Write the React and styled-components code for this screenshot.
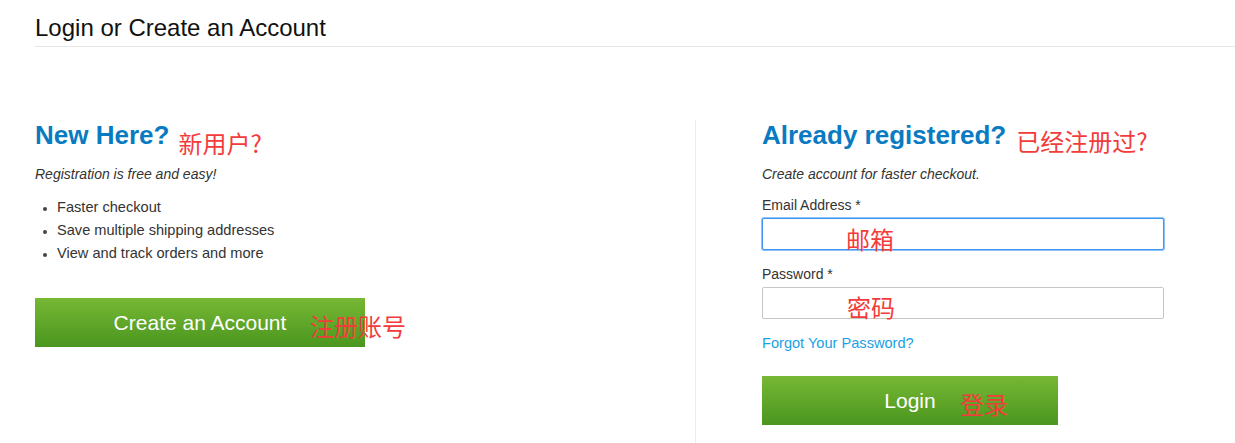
import React from "react";
import styled, { createGlobalStyle } from "styled-components";

const GlobalStyle = createGlobalStyle`
  html, body {
    margin: 0;
    padding: 0;
    background: #fff;
  }
  body {
    font-family: Arial, "Liberation Sans", sans-serif;
    color: #333;
  }
`;

const Page = styled.div`
  width: 1235px;
  height: 443px;
  overflow: hidden;
  padding-left: 35px;
  box-sizing: border-box;
`;

const PageTitle = styled.h1`
  margin: 0;
  padding: 14px 0 4px;
  font-size: 24px;
  line-height: 28px;
  font-weight: normal;
  color: #111;
  border-bottom: 1px solid #e8e8e8;
`;

const Columns = styled.div`
  display: grid;
  grid-template-columns: 660px 1fr;
  margin-top: 73px;
  height: 330px;
`;

const Column = styled.section`
  display: flex;
  flex-direction: column;
  align-items: flex-start;
  padding-left: ${(p) => p.$pad || 0}px;
  border-left: ${(p) => (p.$divider ? "1px solid #ececec" : "none")};
`;

const HeadingRow = styled.div`
  display: flex;
  align-items: flex-start;
  height: 30px;
  gap: ${(p) => p.$gap}px;
`;

const Heading = styled.h2`
  margin: 0;
  font-size: 26px;
  line-height: 30px;
  font-weight: bold;
  color: #0a7bc1;
`;

// red hand-written annotations laid over the page
const Note = styled.span`
  font-family: "Noto Sans CJK SC", "Noto Sans", sans-serif;
  font-size: 24px;
  line-height: 24px;
  color: #f23c3c;
  white-space: nowrap;
  pointer-events: none;
`;

const HeadNote = styled(Note)`
  margin-top: ${(p) => p.$top}px;
`;

const OverNote = styled(Note)`
  position: absolute;
  top: ${(p) => p.$top}px;
  left: ${(p) => p.$left}px;
`;

const Intro = styled.p`
  margin: 15px 0 0;
  font-size: 14px;
  line-height: 18px;
  font-style: italic;
  color: #333;
`;

const Perks = styled.ul`
  margin: 13px 0 0;
  padding-left: 22px;
  font-size: 14.6px;
  line-height: 23px;
  color: #333;

  li::marker {
    font-size: 12px;
    color: #444;
  }
`;

const ButtonWrap = styled.div`
  position: relative;
  margin-top: ${(p) => p.$top}px;
`;

const GreenButton = styled.button`
  display: block;
  width: ${(p) => p.$width}px;
  height: 49px;
  border: none;
  padding: 0;
  background: linear-gradient(#77b834, #4a961f);
  color: #fff;
  font-family: Arial, "Liberation Sans", sans-serif;
  font-size: 21px;
  cursor: pointer;
`;

const Field = styled.div`
  position: relative;
  display: flex;
  flex-direction: column;
  gap: 4px;
  margin-top: ${(p) => p.$top}px;
`;

const Label = styled.label`
  font-size: 14px;
  line-height: 18px;
  color: #333;
`;

const Input = styled.input`
  box-sizing: border-box;
  width: 402px;
  height: 32px;
  padding: 0 8px;
  border: 1px solid ${(p) => (p.$focused ? "#3f97f1" : "#c6c6c6")};
  box-shadow: ${(p) => (p.$focused ? "0 0 0 1px #8cc2f8" : "none")};
  border-radius: 2px;
  outline: none;
  font-size: 14px;
`;

const ForgotLink = styled.a`
  display: block;
  margin-top: 15px;
  font-size: 14.6px;
  line-height: 18px;
  color: #19a1e3;
  text-decoration: none;
`;

export default function App() {
  return (
    <Page>
      <GlobalStyle />
      <PageTitle>Login or Create an Account</PageTitle>
      <Columns>
        <Column>
          <HeadingRow $gap={9}>
            <Heading>New Here?</Heading>
            <HeadNote $top={11}>新用户?</HeadNote>
          </HeadingRow>
          <Intro>Registration is free and easy!</Intro>
          <Perks>
            <li>Faster checkout</li>
            <li>Save multiple shipping addresses</li>
            <li>View and track orders and more</li>
          </Perks>
          <ButtonWrap $top={33}>
            <GreenButton $width={330}>Create an Account</GreenButton>
            <OverNote $top={16} $left={275}>注册账号</OverNote>
          </ButtonWrap>
        </Column>

        <Column $pad={66} $divider>
          <HeadingRow $gap={10}>
            <Heading>Already registered?</Heading>
            <HeadNote $top={9}>已经注册过?</HeadNote>
          </HeadingRow>
          <Intro>Create account for faster checkout.</Intro>
          <Field $top={13}>
            <Label>Email Address *</Label>
            <Input $focused />
            <OverNote $top={31} $left={84}>邮箱</OverNote>
          </Field>
          <Field $top={15}>
            <Label>Password *</Label>
            <Input type="password" />
            <OverNote $top={30} $left={85}>密码</OverNote>
          </Field>
          <ForgotLink href="#">Forgot Your Password?</ForgotLink>
          <ButtonWrap $top={24}>
            <GreenButton $width={296}>Login</GreenButton>
            <OverNote $top={16} $left={198}>登录</OverNote>
          </ButtonWrap>
        </Column>
      </Columns>
    </Page>
  );
}
